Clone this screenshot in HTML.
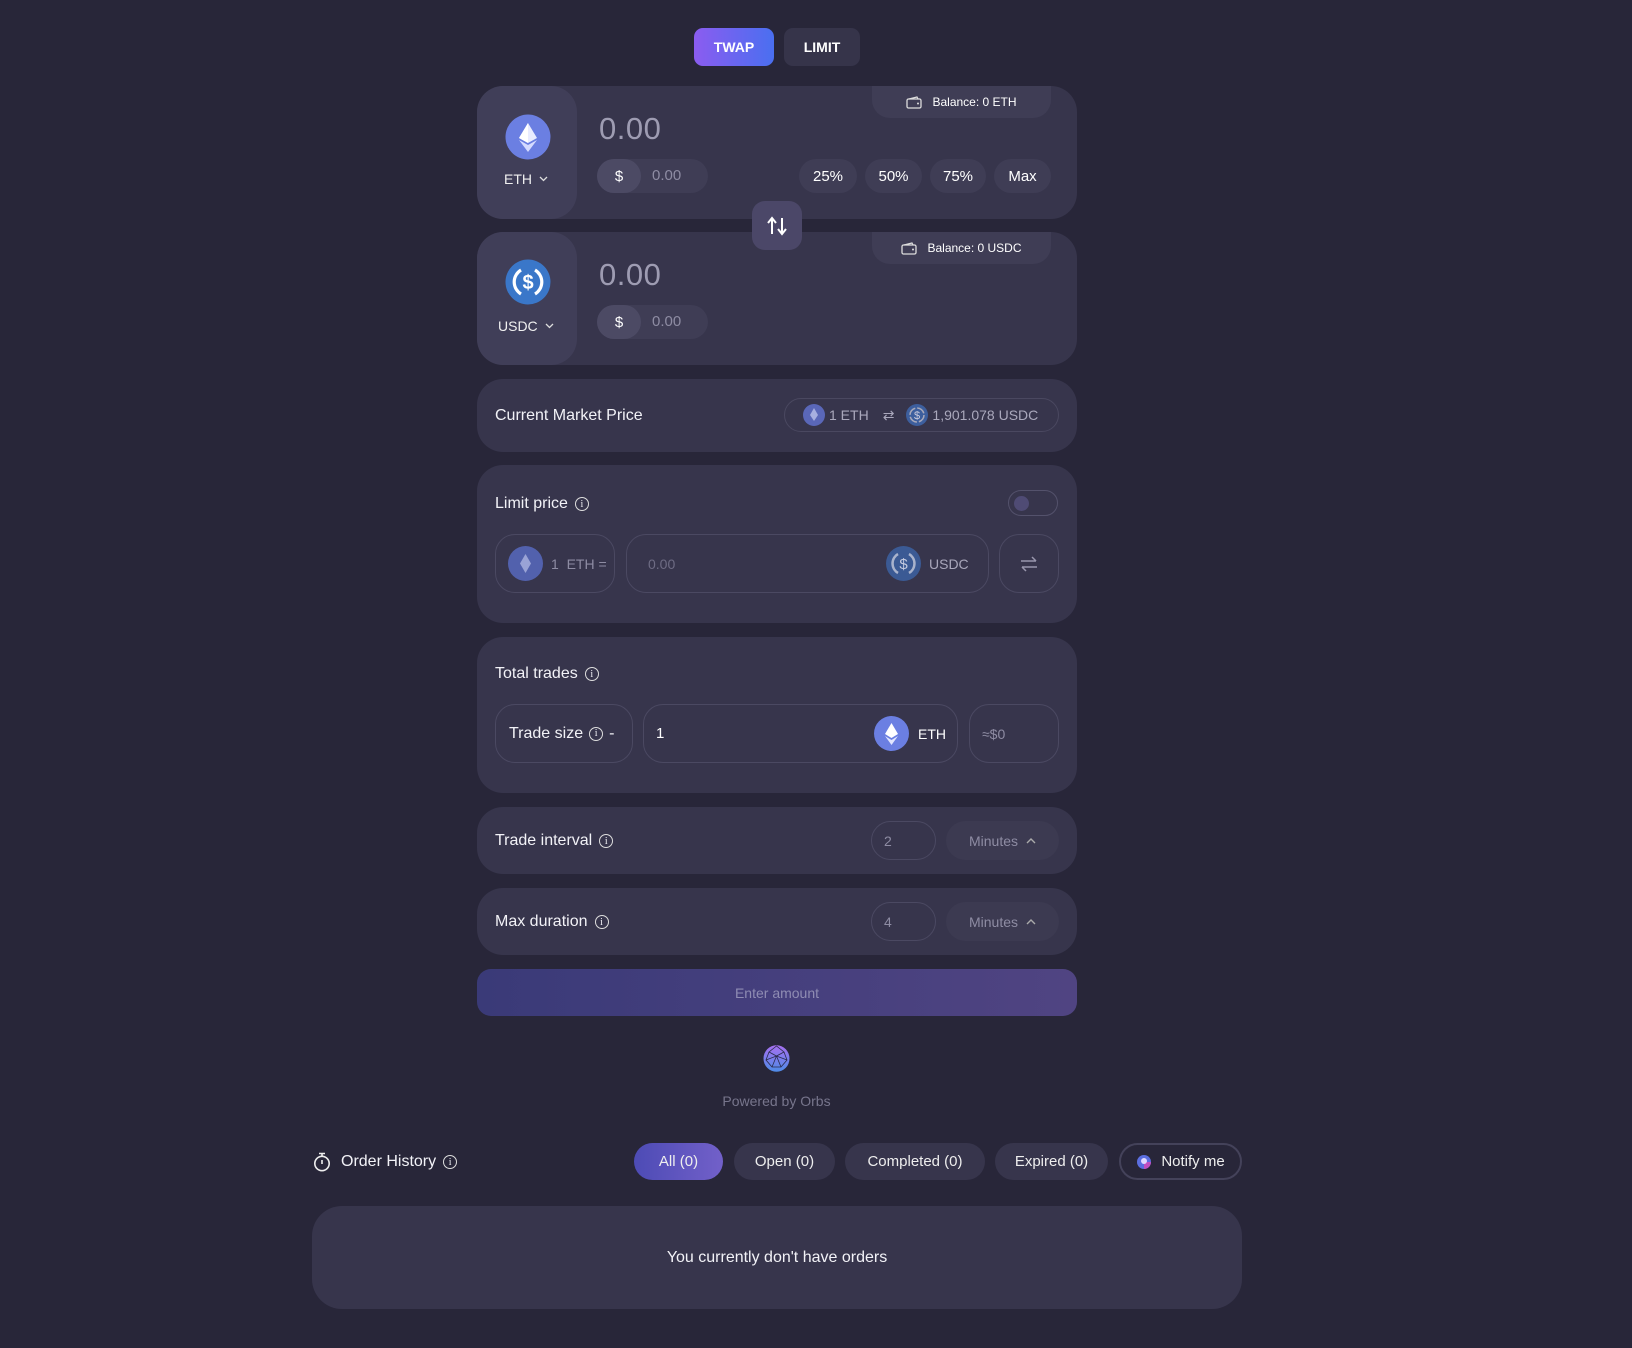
<!DOCTYPE html>
<html><head><meta charset="utf-8">
<style>
*{box-sizing:border-box;margin:0;padding:0}
body{width:1632px;height:1348px;background:#282639;font-family:"Liberation Sans",sans-serif;color:#fff;position:relative;overflow:hidden}
.a{position:absolute}
.card{position:absolute;left:477px;width:600px;background:#37354c;border-radius:26px}
.flex{display:flex;align-items:center;justify-content:center}
.pill{position:absolute;border-radius:17px;background:#2f2d43;color:#fff;font-size:15px}
.lbl{position:absolute;left:18px;font-size:16px;color:#f2f2f7;display:flex;align-items:center;gap:7px}
.info{width:14px;height:14px;border:1.2px solid #ddd;border-radius:50%;font-size:10px;display:flex;align-items:center;justify-content:center;font-family:"Liberation Serif",serif}
.box{position:absolute;border:1px solid #4b4962;border-radius:20px;display:flex;align-items:center}
.tab{position:absolute;top:1143px;height:37px;border-radius:19px;background:#37354c;font-size:15px;display:flex;align-items:center;justify-content:center;color:#eee}
.big{position:absolute;left:122px;top:25px;font-size:31px;color:#9e9cb2;letter-spacing:0.5px}
</style></head><body>

<div class="a flex" style="left:694px;top:28px;width:80px;height:38px;border-radius:9px;background:linear-gradient(90deg,#8b5cf0,#4a6ff0);font-size:14px;font-weight:bold">TWAP</div>
<div class="a flex" style="left:784px;top:28px;width:76px;height:38px;border-radius:9px;background:#36344a;font-size:14px;font-weight:bold">LIMIT</div>

<div class="card" style="top:86px;height:133px">
  <div class="a" style="left:0;top:0;width:100px;height:133px;background:#403e58;border-radius:26px"></div>
  <svg class="a" style="left:28px;top:28px" width="46" height="46" viewBox="0 0 46 46"><circle cx="23" cy="23" r="22.5" fill="#6b7fe2"/><path d="M23 9 L32 24 L23 29 L14 24Z" fill="#e9ecff"/><path d="M23 9 L23 29 L14 24Z" fill="#fff"/><path d="M23 31 L32 26 L23 38 L14 26Z" fill="#d5dbff"/></svg>
  <div class="a" style="left:27px;top:85px;font-size:14px;color:#f0f0f0;display:flex;align-items:center;gap:7px">ETH <svg width="9" height="6" viewBox="0 0 9 6"><path d="M1 1 L4.5 4.5 L8 1" fill="none" stroke="#ddd" stroke-width="1.3"/></svg></div>
  <div class="big">0.00</div>
  <div class="pill" style="left:120px;top:73px;width:111px;height:34px;background:#3f3d55"><div class="a flex" style="left:0;top:0;width:44px;height:34px;border-radius:17px;background:#4c4a64">$</div><div class="a" style="left:55px;top:8px;color:#8e8ca3">0.00</div></div>
  <div class="a flex" style="left:395px;top:0;width:179px;height:32px;background:#3f3d55;border-radius:0 0 18px 18px;font-size:12px;gap:10px"><svg width="16" height="13" viewBox="0 0 16 13"><rect x="1" y="3" width="14" height="9" rx="1.5" fill="none" stroke="#ddd" stroke-width="1.3"/><path d="M3 3 L11 1 L12 3" fill="none" stroke="#ddd" stroke-width="1.2"/><circle cx="12" cy="7.5" r="1" fill="#ddd"/></svg>Balance: 0 ETH</div>
  <div class="pill flex" style="left:322px;top:73px;width:58px;height:34px;background:#3f3d55">25%</div>
  <div class="pill flex" style="left:388px;top:73px;width:57px;height:34px;background:#3f3d55">50%</div>
  <div class="pill flex" style="left:453px;top:73px;width:56px;height:34px;background:#3f3d55">75%</div>
  <div class="pill flex" style="left:517px;top:73px;width:57px;height:34px;background:#3f3d55">Max</div>
</div>

<div class="card" style="top:232px;height:133px">
  <div class="a" style="left:0;top:0;width:100px;height:133px;background:#403e58;border-radius:26px"></div>
  <svg class="a" style="left:28px;top:27px" width="46" height="46" viewBox="0 0 46 46"><circle cx="23" cy="23" r="22.5" fill="#3a77c9"/><path d="M16 11 A14 14 0 0 0 16 35" fill="none" stroke="#fff" stroke-width="3.2"/><path d="M30 11 A14 14 0 0 1 30 35" fill="none" stroke="#fff" stroke-width="3.2"/><text x="23" y="30" font-size="20" font-weight="bold" fill="#fff" text-anchor="middle" font-family="Liberation Sans">$</text></svg>
  <div class="a" style="left:21px;top:86px;font-size:14px;color:#f0f0f0;display:flex;align-items:center;gap:7px">USDC <svg width="9" height="6" viewBox="0 0 9 6"><path d="M1 1 L4.5 4.5 L8 1" fill="none" stroke="#ddd" stroke-width="1.3"/></svg></div>
  <div class="big">0.00</div>
  <div class="pill" style="left:120px;top:73px;width:111px;height:34px;background:#3f3d55"><div class="a flex" style="left:0;top:0;width:44px;height:34px;border-radius:17px;background:#4c4a64">$</div><div class="a" style="left:55px;top:8px;color:#8e8ca3">0.00</div></div>
  <div class="a flex" style="left:395px;top:0;width:179px;height:32px;background:#3f3d55;border-radius:0 0 18px 18px;font-size:12px;gap:10px"><svg width="16" height="13" viewBox="0 0 16 13"><rect x="1" y="3" width="14" height="9" rx="1.5" fill="none" stroke="#ddd" stroke-width="1.3"/><path d="M3 3 L11 1 L12 3" fill="none" stroke="#ddd" stroke-width="1.2"/><circle cx="12" cy="7.5" r="1" fill="#ddd"/></svg>Balance: 0 USDC</div>
</div>

<div class="a flex" style="left:752px;top:201px;width:50px;height:49px;background:#4b4768;border-radius:13px"><svg width="22" height="20" viewBox="0 0 22 20"><path d="M6 18 V3 M2 7 L6 2 L10 7" fill="none" stroke="#fff" stroke-width="2"/><path d="M16 2 V17 M12 13 L16 18 L20 13" fill="none" stroke="#fff" stroke-width="2"/></svg></div>

<div class="card" style="top:379px;height:73px">
  <div class="lbl" style="top:28px">Current Market Price</div>
  <div class="a" style="left:307px;top:19px;width:275px;height:34px;border:1px solid #4a4860;border-radius:17px;display:flex;align-items:center;padding-left:18px;font-size:14px;color:#aaa8bc">
    <svg width="22" height="22" viewBox="0 0 22 22"><circle cx="11" cy="11" r="11" fill="#5a67b8"/><path d="M11 4 L15 11 L11 17 L7 11Z" fill="#a7afe0"/></svg>
    <span style="margin-left:4px">1 ETH</span>
    <span style="margin:0 12px 0 14px;font-size:14px">&#8644;</span>
    <svg width="22" height="22" viewBox="0 0 22 22"><circle cx="11" cy="11" r="11" fill="#3d5f9e"/><circle cx="11" cy="11" r="7" fill="none" stroke="#aab" stroke-width="1.5" stroke-dasharray="9 2"/><text x="11" y="15" font-size="11" fill="#ccd" text-anchor="middle" font-family="Liberation Sans">$</text></svg>
    <span style="margin-left:4px">1,901.078 USDC</span>
  </div>
</div>

<div class="card" style="top:465px;height:158px">
  <div class="lbl" style="top:30px">Limit price <span class="info">i</span></div>
  <div class="a" style="left:531px;top:25px;width:50px;height:26px;border:1px solid #54526c;border-radius:13px"><div class="a" style="left:5px;top:5px;width:15px;height:15px;border-radius:50%;background:#4f4b74"></div></div>
  <div class="box" style="left:18px;top:69px;width:120px;height:59px;padding-left:12px;font-size:14px;color:#8e8ca3">
    <svg width="35" height="35" viewBox="0 0 35 35"><circle cx="17.5" cy="17.5" r="17.5" fill="#5261ad"/><path d="M17.5 8 L23 17.5 L17.5 27 L12 17.5Z" fill="#9aa3d6"/></svg><span style="margin-left:8px">1&nbsp; ETH =</span></div>
  <div class="box" style="left:149px;top:69px;width:363px;height:59px;font-size:14px;color:#6e6c84">
    <span style="margin-left:21px">0.00</span>
    <svg style="position:absolute;left:259px" width="35" height="35" viewBox="0 0 35 35"><circle cx="17.5" cy="17.5" r="17.5" fill="#3b5a94"/><path d="M12 8 A11 11 0 0 0 12 27 M23 8 A11 11 0 0 1 23 27" fill="none" stroke="#a9b3cc" stroke-width="2.5"/><text x="17.5" y="23" font-size="15" fill="#c5cbe0" text-anchor="middle" font-family="Liberation Sans">$</text></svg>
    <span style="position:absolute;left:302px;color:#a8a6ba">USDC</span></div>
  <div class="box" style="left:522px;top:69px;width:60px;height:59px;justify-content:center"><svg width="20" height="18" viewBox="0 0 20 18"><path d="M2 6 H17 M13 2 L17 6 M18 12 H3 M7 16 L3 12" fill="none" stroke="#9997ad" stroke-width="1.5"/></svg></div>
</div>

<div class="card" style="top:637px;height:156px">
  <div class="lbl" style="top:28px">Total trades <span class="info">i</span></div>
  <div class="box" style="left:18px;top:67px;width:138px;height:59px;padding-left:13px;font-size:16px;color:#f2f2f7;gap:6px">Trade size <span class="info">i</span> -</div>
  <div class="box" style="left:166px;top:67px;width:315px;height:59px;font-size:15px">
    <span style="margin-left:12px">1</span>
    <svg style="position:absolute;left:230px" width="35" height="35" viewBox="0 0 35 35"><circle cx="17.5" cy="17.5" r="17.5" fill="#6b7fe2"/><path d="M17.5 7 L24 18 L17.5 22 L11 18Z" fill="#fff"/><path d="M17.5 24 L24 20 L17.5 29 L11 20Z" fill="#e1e5ff"/></svg>
    <span style="position:absolute;left:274px;font-size:14px">ETH</span></div>
  <div class="box" style="left:492px;top:67px;width:90px;height:59px;padding-left:12px;font-size:14px;color:#8e8ca3">≈$0</div>
</div>

<div class="card" style="top:807px;height:67px">
  <div class="lbl" style="top:25px">Trade interval <span class="info">i</span></div>
  <div class="box" style="left:394px;top:14px;width:65px;height:39px;padding-left:12px;font-size:14px;color:#8e8ca3">2</div>
  <div class="a flex" style="left:469px;top:14px;width:113px;height:39px;border-radius:20px;background:#3c3a51;font-size:14px;color:#8e8ca3;gap:8px">Minutes <svg width="10" height="6" viewBox="0 0 10 6"><path d="M1 5 L5 1 L9 5" fill="none" stroke="#aaa" stroke-width="1.4"/></svg></div>
</div>

<div class="card" style="top:888px;height:67px">
  <div class="lbl" style="top:25px">Max duration <span class="info">i</span></div>
  <div class="box" style="left:394px;top:14px;width:65px;height:39px;padding-left:12px;font-size:14px;color:#8e8ca3">4</div>
  <div class="a flex" style="left:469px;top:14px;width:113px;height:39px;border-radius:20px;background:#3c3a51;font-size:14px;color:#8e8ca3;gap:8px">Minutes <svg width="10" height="6" viewBox="0 0 10 6"><path d="M1 5 L5 1 L9 5" fill="none" stroke="#aaa" stroke-width="1.4"/></svg></div>
</div>

<div class="a flex" style="left:477px;top:969px;width:600px;height:47px;border-radius:14px;background:linear-gradient(90deg,#3a3a78,#504482);font-size:14px;color:#8f8cb3">Enter amount</div>

<svg class="a" style="left:763px;top:1045px" width="27" height="27" viewBox="0 0 27 27"><defs><linearGradient id="og" x1="0" y1="0" x2="0" y2="1"><stop offset="0" stop-color="#a76ff0"/><stop offset="1" stop-color="#4e8be8"/></linearGradient></defs><ellipse cx="13.5" cy="13.5" rx="13" ry="13.3" fill="url(#og)"/><path d="M13.5 1 L6 7 L3 15 L9 22 L18 22 L24 15 L21 7Z M6 7 L13.5 11 L21 7 M13.5 11 L9 22 M13.5 11 L18 22 M3 15 L13.5 11 L24 15" fill="none" stroke="#2a2a4a" stroke-width="0.8"/></svg>
<div class="a" style="left:0;width:1553px;top:1093px;text-align:center;font-size:14px;color:#77758c">Powered by Orbs</div>

<svg class="a" style="left:313px;top:1152px" width="18" height="20" viewBox="0 0 18 20"><circle cx="9" cy="11.5" r="7.2" fill="none" stroke="#eee" stroke-width="1.6"/><path d="M6 1.5 H12 M9 1.5 V4 M9 8 V12" stroke="#eee" stroke-width="1.6"/></svg>
<div class="a" style="left:341px;top:1153px;font-size:16px;display:flex;align-items:center;gap:7px;color:#f2f2f7">Order History <span class="info">i</span></div>
<div class="tab" style="left:634px;width:89px;background:linear-gradient(90deg,#4d4bb5,#7260c9)">All (0)</div>
<div class="tab" style="left:734px;width:101px">Open (0)</div>
<div class="tab" style="left:845px;width:140px">Completed (0)</div>
<div class="tab" style="left:995px;width:113px">Expired (0)</div>
<div class="tab" style="left:1119px;width:123px;background:transparent;border:2px solid #44425a;gap:9px"><svg width="16" height="16" viewBox="0 0 16 16"><circle cx="8" cy="8" r="7" fill="#5b6ee0"/><path d="M8 8 L15 8 A7 7 0 0 1 8 15Z" fill="#c04ec0"/><circle cx="8" cy="7" r="3" fill="#e0d8ff"/></svg>Notify me</div>

<div class="a flex" style="left:312px;top:1206px;width:930px;height:103px;border-radius:30px;background:#37354c;font-size:16px;color:#f2f2f7">You currently don't have orders</div>

</body></html>
